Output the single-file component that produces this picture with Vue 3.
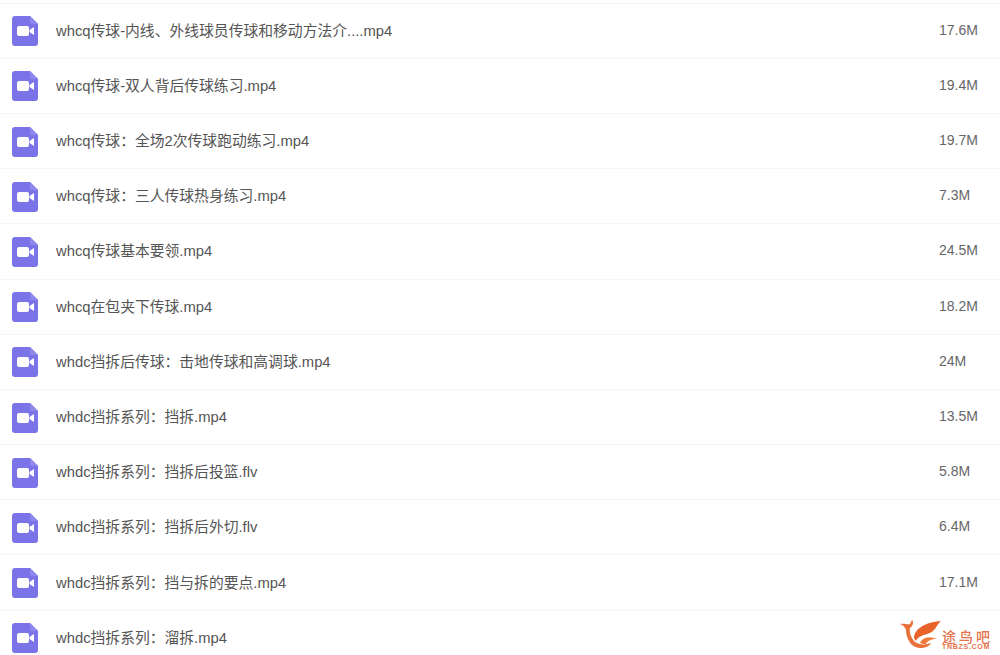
<script setup>
const files = [
  { name: 'whcq传球-内线、外线球员传球和移动方法介....mp4', size: '17.6M' },
  { name: 'whcq传球-双人背后传球练习.mp4', size: '19.4M' },
  { name: 'whcq传球：全场2次传球跑动练习.mp4', size: '19.7M' },
  { name: 'whcq传球：三人传球热身练习.mp4', size: '7.3M' },
  { name: 'whcq传球基本要领.mp4', size: '24.5M' },
  { name: 'whcq在包夹下传球.mp4', size: '18.2M' },
  { name: 'whdc挡拆后传球：击地传球和高调球.mp4', size: '24M' },
  { name: 'whdc挡拆系列：挡拆.mp4', size: '13.5M' },
  { name: 'whdc挡拆系列：挡拆后投篮.flv', size: '5.8M' },
  { name: 'whdc挡拆系列：挡拆后外切.flv', size: '6.4M' },
  { name: 'whdc挡拆系列：挡与拆的要点.mp4', size: '17.1M' },
  { name: 'whdc挡拆系列：溜拆.mp4', size: '' },
]
</script>

<template>
  <div class="page">
    <ul class="list">
      <li v-for="file in files" :key="file.name" class="row">
        <svg class="icon" viewBox="0 0 26 30" width="26" height="30">
          <path d="M3 0H18L26 8V27a3 3 0 0 1-3 3H3a3 3 0 0 1-3-3V3a3 3 0 0 1 3-3Z" fill="#7b73e8" />
          <path d="M18 0L26 8H20a2 2 0 0 1-2-2Z" fill="#8f88ec" />
          <rect x="5" y="10" width="12" height="10" rx="2" fill="#fff" />
          <path d="M17.5 14L22 11V19L17.5 16Z" fill="#fff" />
        </svg>
        <span class="name">{{ file.name }}</span>
        <span class="size">{{ file.size }}</span>
      </li>
    </ul>

    <div class="logo">
      <svg class="logo-mark" viewBox="0 0 42 30" width="42" height="30">
        <path d="M0 6C4 5 8 7 10 6C11 4 12 2 12 2C14 4 13 8 10 10C9 14 11 20 15 24C19 27 26 27 31 25C30 28 25 30 20 30C11 30 6 20 6 12C5 9 3 7 0 6Z" fill="#e8703a" />
        <path d="M14 20C14 12 24 4 41 3C37 6 36 12 30 15C24 17 18 18 16 23Z" fill="#e8642a" />
        <path d="M20 25C22 20 28 18 37 21C31 21 27 23 26 26C24 26 22 26 20 25Z" fill="#ec7a3c" />
      </svg>
      <div class="logo-text">
        <span class="logo-cn">途鸟吧</span>
        <span class="logo-en">TNBZS.COM</span>
      </div>
    </div>
  </div>
</template>

<style>
html, body {
  margin: 0;
  background: #fff;
}
</style>

<style scoped>
.page {
  position: relative;
  width: 1000px;
  height: 655px;
  overflow: hidden;
  background: #fff;
  font-family: "Liberation Sans", "Noto Sans CJK SC", sans-serif;
}

.list {
  list-style: none;
  margin: 0;
  padding: 2.6px 0 0;
}

.row {
  display: flex;
  align-items: center;
  box-sizing: border-box;
  height: 55.2px;
  padding-left: 12px;
  border-top: 1px solid #f5f5f5;
}

.icon {
  flex: none;
  margin-top: 1px;
}

.name {
  margin-left: 18px;
  margin-bottom: 3px;
  width: 883px;
  font-size: 14.8px;
  color: #555;
}

.size {
  margin-bottom: 2px;
  font-size: 14px;
  color: #666;
}

.logo {
  position: absolute;
  left: 900px;
  top: 618px;
  display: flex;
  align-items: flex-end;
}

.logo-mark {
  flex: none;
}

.logo-text {
  display: flex;
  flex-direction: column;
  align-items: flex-start;
  width: 48px;
  margin-bottom: -2px;
  color: #e4734c;
  white-space: nowrap;
}

.logo-cn {
  font-family: "Noto Sans CJK SC", sans-serif;
  font-size: 14px;
  line-height: 13px;
  letter-spacing: 3px;
  font-weight: 500;
}

.logo-en {
  font-size: 7px;
  line-height: 7px;
  font-weight: 700;
  letter-spacing: 0.7px;
}
</style>
